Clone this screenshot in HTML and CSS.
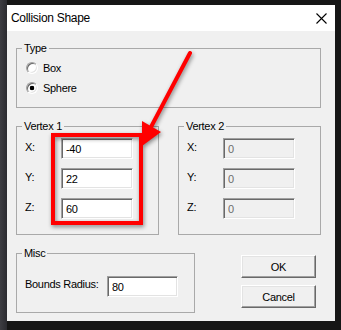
FILE: index.html
```html
<!DOCTYPE html>
<html lang="en">
<head>
  <meta charset="UTF-8" />
  <title>Collision Shape</title>
  <link rel="stylesheet" href="styles.css">
</head>
<body>
  <div class="dialog">
    <div class="titlebar">
      <span class="title">Collision Shape</span>
      <svg class="close" width="11" height="11" viewBox="0 0 11 11">
        <path d="M0.5 0.5 L10.5 10.5 M10.5 0.5 L0.5 10.5" stroke="#000" stroke-width="1.1" fill="none"/>
      </svg>
    </div>

    <div class="client">
      <fieldset class="group group-type">
        <legend>Type</legend>
        <label class="radio"><span class="radio-dot"></span>Box</label>
        <label class="radio"><span class="radio-dot checked"></span>Sphere</label>
      </fieldset>

      <div class="vertex-row">
        <fieldset class="group group-vertex">
          <legend>Vertex 1</legend>
          <div class="field"><span class="field-label">X:</span><input class="edit" value="-40"></div>
          <div class="field"><span class="field-label">Y:</span><input class="edit" value="22"></div>
          <div class="field"><span class="field-label">Z:</span><input class="edit" value="60"></div>
        </fieldset>
        <fieldset class="group group-vertex">
          <legend>Vertex 2</legend>
          <div class="field"><span class="field-label">X:</span><input class="edit" value="0" disabled></div>
          <div class="field"><span class="field-label">Y:</span><input class="edit" value="0" disabled></div>
          <div class="field"><span class="field-label">Z:</span><input class="edit" value="0" disabled></div>
        </fieldset>
      </div>

      <div class="bottom-row">
        <fieldset class="group group-misc">
          <legend>Misc</legend>
          <div class="field"><span class="field-label wide">Bounds Radius:</span><input class="edit" value="80"></div>
        </fieldset>
        <div class="buttons">
          <button class="btn">OK</button>
          <button class="btn">Cancel</button>
        </div>
      </div>
    </div>
  </div>

  <!-- red highlight + arrow drawn over the dialog -->
  <svg class="annotation" width="341" height="330" viewBox="0 0 341 330">
    <rect x="53" y="135" width="88" height="88" fill="none" stroke="#ff0000" stroke-width="4"/>
    <line x1="190" y1="53" x2="151" y2="127" stroke="#ff0000" stroke-width="4" stroke-linecap="round"/>
    <polygon points="142,121 161,132 142,146" fill="#ff0000"/>
  </svg>
</body>
</html>
```

FILE: styles.css
```css
body {
  margin: 0;
  width: 341px;
  height: 330px;
  overflow: hidden;
  position: relative;
  background:
    linear-gradient(90deg, #3d3d42 0, #2b2b30 7px, transparent 7px),
    #161616;
  font-family: "Liberation Sans", Arial, sans-serif;
  font-size: 11px;
  letter-spacing: -0.3px;
  color: #000;
}

.dialog {
  width: 328px;
  height: 316px;
  margin: 5px 0 0 7px;
  background: #f0f0f0;
  display: flex;
  flex-direction: column;
  overflow: hidden;
}

.titlebar {
  height: 26px;
  flex: none;
  background: #fff;
  display: flex;
  align-items: center;
  justify-content: space-between;
  padding: 0 8px 0 4px;
}

.title {
  font-size: 12px;
}

.close {
  display: block;
  margin-top: 1px;
}

.client {
  padding-left: 9px;
  display: flex;
  flex-direction: column;
}

.group {
  margin: 0;
  border: 1px solid #a9a9a9;
  padding: 0 8px;
  min-width: 0;
}

.group legend {
  padding: 0 2px;
  margin-left: -3px;
  line-height: 13px;
}

.group-type {
  width: 305px;
  box-sizing: border-box;
  margin-top: 11px;
  padding-top: 3px;
  padding-bottom: 9px;
}

.radio {
  height: 20px;
  display: flex;
  align-items: center;
}

.radio-dot {
  width: 10px;
  height: 10px;
  margin: 0 5px 0 1px;
  border-radius: 50%;
  border: 1px solid;
  border-color: #a0a0a0 #ffffff #ffffff #a0a0a0;
  box-shadow: inset 1px 1px 0 #696969, inset -1px -1px 0 #e3e3e3;
  background: #fff;
}

.radio-dot.checked {
  background: radial-gradient(circle, #000 0, #000 2px, #fff 2.6px);
}

.vertex-row {
  display: flex;
  gap: 19px;
  margin-top: 12px;
}

.group-vertex {
  width: 143px;
  box-sizing: border-box;
  padding-top: 5px;
  padding-bottom: 15px;
  display: flex;
  flex-direction: column;
  gap: 9px;
}

.field {
  display: flex;
  align-items: flex-start;
}

.field-label {
  width: 36px;
  flex: none;
  padding-top: 3px;
}

.field-label.wide {
  width: 82px;
  padding-top: 2px;
}

.edit {
  width: 72px;
  height: 21px;
  box-sizing: border-box;
  margin: 0;
  padding: 0 4px;
  border: 1px solid;
  border-color: #a0a0a0 #ffffff #ffffff #a0a0a0;
  box-shadow: inset 1px 1px 0 #696969, inset -1px -1px 0 #e3e3e3;
  background: #fff;
  font: inherit;
  letter-spacing: inherit;
  color: #000;
  outline: none;
}

.edit:disabled {
  background: #f0f0f0;
  color: #6d6d6d;
}

.bottom-row {
  display: flex;
  margin-top: 12px;
}

.group-misc {
  width: 179px;
  box-sizing: border-box;
  padding-top: 16px;
  padding-bottom: 15px;
}

.group-misc .edit {
  width: 71px;
}

.buttons {
  margin: 8px 0 0 46px;
  display: flex;
  flex-direction: column;
  gap: 7px;
}

.btn {
  width: 75px;
  height: 23px;
  margin: 0;
  padding: 0;
  background: #f0f0f0;
  border: 1px solid;
  border-color: #ffffff #696969 #696969 #ffffff;
  box-shadow: inset -1px -1px 0 #a0a0a0, inset 1px 1px 0 #e3e3e3;
  font: inherit;
  letter-spacing: inherit;
  color: #000;
}

.annotation {
  position: absolute;
  left: 0;
  top: 0;
  pointer-events: none;
  filter: drop-shadow(1px 2px 2px rgba(0, 0, 0, 0.45));
}
```
